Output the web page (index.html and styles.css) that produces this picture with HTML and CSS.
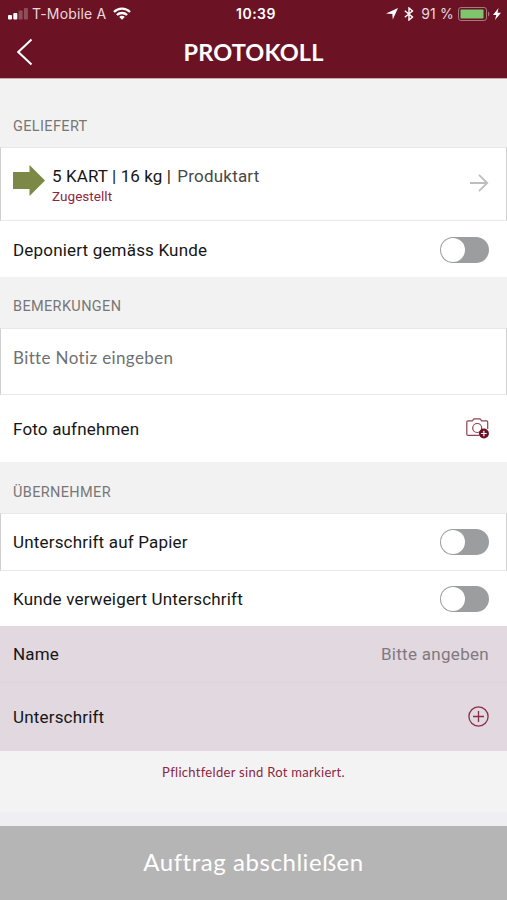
FILE: index.html
```html
<!DOCTYPE html>
<html lang="de">
<head>
    <meta charset="UTF-8">
    <meta name="viewport" content="width=device-width, initial-scale=1.0">
    <title>Protokoll</title>
    <link rel="stylesheet" href="styles.css">
</head>
<body>
    <header class="header">
        <div class="status-bar">
            <div class="status-left">
                <svg class="signal" width="20" height="12" viewBox="0 0 20 12" fill="#fff">
                    <rect x="0" y="7" width="4" height="4.500" rx="1"/>
                    <rect x="5.300" y="5" width="4" height="6.500" rx="1"/>
                    <rect x="10.600" y="2.500" width="4" height="9" rx="1" opacity=".25"/>
                    <rect x="15.900" y="0" width="4" height="11.500" rx="1" opacity=".25"/>
                </svg>
                <span class="carrier">T-Mobile A</span>
                <svg class="wifi" width="18" height="13" viewBox="0 0 18 13" fill="none" stroke="#fff" stroke-width="2.3">
                    <path d="M1 5C5.500 .6 12.500 .6 17 5"/>
                    <path d="M3.900 8C6.700 5.300 11.300 5.300 14.100 8"/>
                    <path d="M9 12.700L6.200 9.900C7.800 8.500 10.200 8.500 11.800 9.900Z" fill="#fff" stroke="none"/>
                </svg>
            </div>
            <span class="time">10:39</span>
            <div class="status-right">
                <svg width="12" height="12" viewBox="0 0 12 12" fill="#fff">
                    <path d="M12 0L6.800 11.500L6.300 5.900L0 5.400Z"/>
                </svg>
                <svg class="bluetooth" width="10" height="14" viewBox="0 0 10 14" fill="none" stroke="#fff" stroke-width="1.4">
                    <path d="M.8 3.800L8.500 10L5 13V1L8.500 4L.8 10.200"/>
                </svg>
                <span class="percent">91 %</span>
                <svg class="battery" width="32" height="14" viewBox="0 0 32 14">
                    <rect x=".5" y=".5" width="28" height="13" rx="2.500" fill="none" stroke="#a8777f"/>
                    <rect x="2.500" y="2.500" width="23" height="9" rx=".8" fill="#7fc56e"/>
                    <path d="M30 4.500C31.800 5.200 31.800 8.800 30 9.500Z" fill="#a8777f"/>
                </svg>
                <svg class="bolt" width="8" height="12" viewBox="0 0 8 12" fill="#fff">
                    <path d="M5.500 0L0 7H3.300L2 12L8 4.700H4.500Z"/>
                </svg>
            </div>
        </div>
        <div class="title-bar">
            <svg class="back" width="16" height="28" viewBox="0 0 16 28" fill="none" stroke="#fff" stroke-width="2">
                <path d="M14.500 1.500L1.300 14L14.500 26.500"/>
            </svg>
            <h1>PROTOKOLL</h1>
        </div>
    </header>

    <main>
        <h2 class="section-title section-first">GELIEFERT</h2>
        <div class="row row-boxed row-delivery">
            <svg class="arrow" width="32" height="31" viewBox="0 0 32 31" fill="#7c8845">
                <path d="M0 7H16.500V0L32 15.500L16.500 31V24H0Z"/>
            </svg>
            <div class="delivery">
                <div class="delivery-title">5 KART | 16 kg | <span>Produktart</span></div>
                <div class="delivery-state">Zugestellt</div>
            </div>
            <svg class="next" width="19" height="18" viewBox="0 0 19 18" fill="none" stroke="#bdbdbd" stroke-width="1.800">
                <path d="M0 9H17.500M9 .8L17.200 9L9 17.200"/>
            </svg>
        </div>
        <div class="row row-deposit">
            <span class="deposit">Deponiert gemäss Kunde</span>
            <span class="toggle"></span>
        </div>

        <h2 class="section-title section-notes">BEMERKUNGEN</h2>
        <div class="row row-boxed row-note">
            <span class="placeholder">Bitte Notiz eingeben</span>
        </div>
        <div class="row row-photo">
            <span class="photo">Foto aufnehmen</span>
            <svg width="24" height="21" viewBox="0 0 24 21" fill="none" stroke="#8d4355" stroke-width="1.200">
                <path d="M14 17.400H3Q1.800 17.400 1.800 16.200V4Q1.800 2.800 3 2.800H7.300L9 .8H15L16.700 2.800H21.500Q22.700 2.800 22.700 4V11"/>
                <circle cx="12.200" cy="10" r="4.500"/>
                <circle cx="18.900" cy="15.500" r="5" fill="#6d1024" stroke="none"/>
                <path d="M16.100 15.500H21.700M18.900 12.700V18.300" stroke="#fff"/>
            </svg>
        </div>

        <h2 class="section-title section-receiver">ÜBERNEHMER</h2>
        <div class="row row-boxed row-paper">
            <span class="paper">Unterschrift auf Papier</span>
            <span class="toggle"></span>
        </div>
        <div class="row row-refused">
            <span class="refused">Kunde verweigert Unterschrift</span>
            <span class="toggle"></span>
        </div>
        <div class="row row-required row-name">
            <span class="name">Name</span>
            <span class="value">Bitte angeben</span>
        </div>
        <div class="row row-required row-signature">
            <span class="signature">Unterschrift</span>
            <svg width="22" height="22" viewBox="0 0 22 22" fill="none" stroke="#8b2c49" stroke-width="1.300">
                <circle cx="11.500" cy="10.500" r="9.600"/>
                <path d="M6 10.500H17M11.500 5V16"/>
            </svg>
        </div>
        <p class="hint">Pflichtfelder sind Rot markiert.</p>
    </main>

    <button class="submit" type="button">Auftrag abschließen</button>
</body>
</html>
```

FILE: styles.css
```css
:root {
    --primary-color: #6b1324;
    --section-color: #f2f2f2;
    --line-color: #e8e8e8;
    --required-color: #e2d8df;
}

* {
    box-sizing: border-box;
}

body {
    margin: 0;
    height: 900px;
    display: flex;
    flex-direction: column;
    background-color: #eeeef3;
    color: #161616;
    font-family: Roboto, sans-serif;
    font-size: 17px;
    letter-spacing: 0.18px;
    font-variant-ligatures: none;
    white-space: nowrap;
    overflow: hidden;
}

svg {
    display: block;
    flex-shrink: 0;
}

/* Header */
.header {
    height: 79px;
    flex-shrink: 0;
    background-color: var(--primary-color);
    border-bottom: 1px solid #c9a9af;
    color: #fff;
}

.status-bar {
    height: 27px;
    padding: 0 6px 0 8px;
    display: grid;
    grid-template-columns: 1fr auto 1fr;
    align-items: center;
    font-family: Inter, sans-serif;
    font-size: 14px;
}

.status-left,
.status-right {
    display: flex;
    align-items: center;
    color: #ead9dd;
}

.status-right {
    justify-content: flex-end;
}

.carrier {
    margin-left: 4px;
}

.wifi {
    margin-left: 7px;
}

.time {
    padding-left: 3px;
    font-weight: 600;
    letter-spacing: 0.5px;
}

.bluetooth {
    margin-left: 6px;
}

.percent {
    margin-left: 7px;
}

.battery {
    margin-left: 4px;
}

.bolt {
    margin-left: 3px;
}

.title-bar {
    height: 49px;
    padding: 0 17px;
    display: grid;
    grid-template-columns: 16px 1fr 16px;
    align-items: center;
}

h1 {
    margin: 0;
    font-family: Lato, sans-serif;
    font-size: 23.5px;
    font-weight: 700;
    letter-spacing: 0.1px;
    text-align: center;
}

/* Sections */
.section-title {
    margin: 0;
    padding: 0 13px;
    display: flex;
    align-items: center;
    background-color: var(--section-color);
    color: #777;
    font-size: 14.5px;
    font-weight: 400;
    letter-spacing: 0.36px;
}

.section-first {
    height: 68px;
    padding-top: 26px;
}

.section-notes {
    height: 51px;
    padding-top: 8px;
}

.section-receiver {
    height: 51px;
    padding-top: 9px;
}

/* Rows */
.row {
    padding: 0 18px 0 13px;
    display: flex;
    align-items: center;
    justify-content: space-between;
    background-color: #fff;
}

.row-boxed {
    padding: 0 17px 0 12px;
    border: 1px solid var(--line-color);
    border-left-color: #d0d0d0;
    border-right-color: #d0d0d0;
}

.row-delivery {
    height: 74px;
}

.arrow {
    align-self: flex-start;
    margin: 17px 7px 0 0;
}

.delivery {
    flex: 1;
    align-self: flex-start;
    padding-top: 18px;
}

.delivery-title {
    line-height: 21px;
    letter-spacing: 0.1px;
}

.delivery-title span {
    margin-left: 2px;
    color: #484848;
    letter-spacing: 0.2px;
}

.delivery-state {
    color: #8b2743;
    font-size: 13.5px;
    line-height: 18px;
    letter-spacing: 0.05px;
}

.next {
    margin-top: -3px;
}

.row-deposit {
    height: 56px;
    padding-top: 1px;
}

.row-note {
    height: 67px;
    padding-bottom: 9px;
}

.placeholder {
    color: #707070;
    font-family: Lato, sans-serif;
    letter-spacing: 0.37px;
}

.row-photo {
    height: 67px;
}

.row-paper {
    height: 58px;
}

.row-refused {
    height: 55px;
}

.row-required {
    background-color: var(--required-color);
}

.row-name {
    height: 57px;
    border-bottom: 1px solid #dfd4dc;
}

.row-signature {
    height: 68px;
}

.value {
    color: #817980;
    letter-spacing: 0.3px;
}

.toggle {
    width: 49px;
    height: 26px;
    padding: 1px;
    border-radius: 13px;
    background-color: #9b9d9e;
}

.toggle::before {
    content: "";
    display: block;
    width: 24px;
    height: 24px;
    border-radius: 50%;
    background-color: #fff;
}

/* Footer */
.hint {
    height: 61px;
    margin: 0;
    padding-top: 12px;
    background-color: #f3f3f3;
    color: #8b2743;
    font-family: Lato, sans-serif;
    font-size: 13px;
    line-height: 18px;
    letter-spacing: 0.3px;
    text-align: center;
}

.submit {
    height: 74px;
    margin-top: auto;
    padding: 0 0 4px;
    border: none;
    background-color: #b5b5b5;
    color: #fff;
    font-family: Lato, sans-serif;
    font-size: 24px;
    letter-spacing: 0.55px;
}
```
